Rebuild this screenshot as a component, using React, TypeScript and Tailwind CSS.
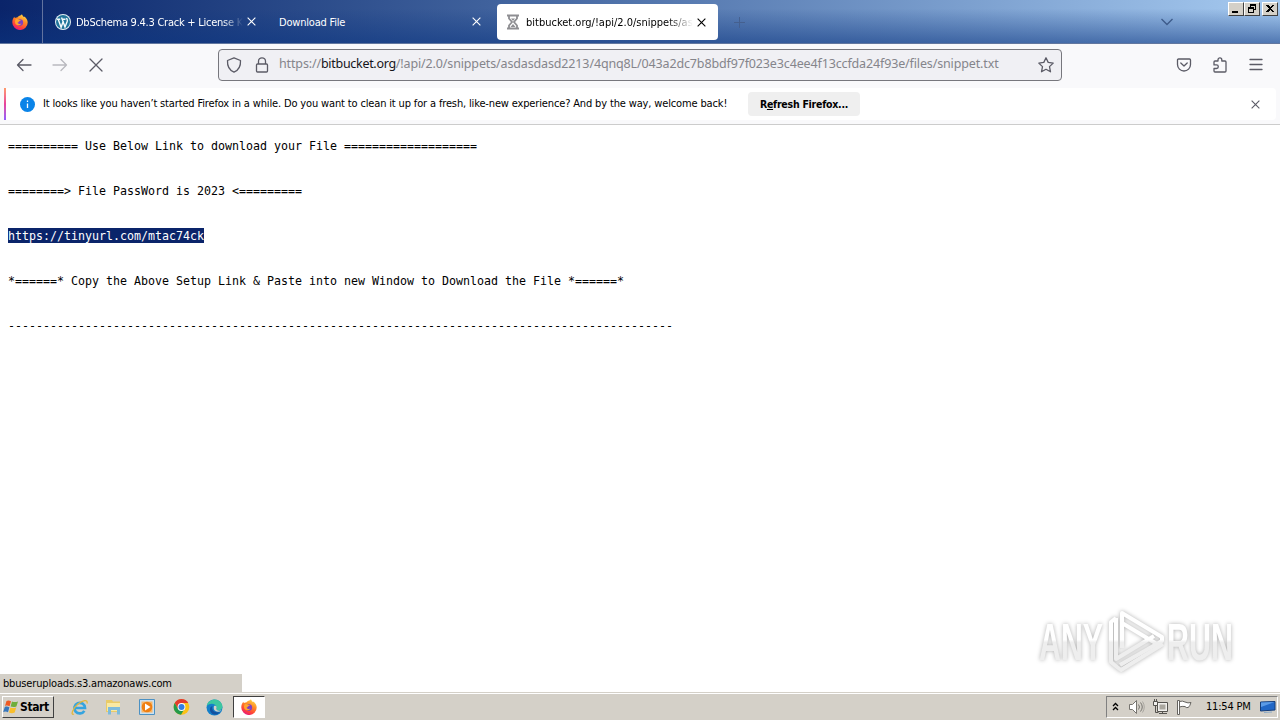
import type { ReactNode } from "react";

const LINES = [
  "========== Use Below Link to download your File ===================",
  "========> File PassWord is 2023 <=========",
  "https://tinyurl.com/mtac74ck",
  "*======* Copy the Above Setup Link & Paste into new Window to Download the File *======*",
  "-".repeat(95),
];

function FirefoxIcon({ className }: { className: string }) {
  return (
    <svg className={className} viewBox="0 0 16 16">
      <defs>
        <linearGradient id="fx" x1="0.8" y1="0" x2="0.3" y2="1">
          <stop offset="0" stopColor="#ffe14a" />
          <stop offset="0.4" stopColor="#ff8a26" />
          <stop offset="0.75" stopColor="#ff4238" />
          <stop offset="1" stopColor="#e31587" />
        </linearGradient>
      </defs>
      <path
        fill="url(#fx)"
        d="M10 .3c.2 1 .9 1.700 1.800 2.600.5-.1.8-.1 1.200.100 1.600 1.500 2.700 3.300 2.700 5.400A7.700 7.600 0 0 1 .3 8.500c0-2.200.8-4.200 2-5.700l.5 1.300c1-.7 1.600-.7 2.400-.5C6.300 1.500 8.500 2.300 10 .3z"
      />
      <circle cx="7.800" cy="8.600" r="3.300" fill="#7d3fc4" />
      <path fill="#ffa52c" d="M3.500 5.500c1.300-.8 2.700-.5 3.700.2.800.2 1.400.2 1.700.4-.2.900-1.200.9-1.900 1.300-.5.300-.5 1.200-1.500 1.200.500 1.500 2.500 1.900 4 1-1.300 2.400-5.200 2.400-6.300-.4-.4-1.200-.3-2.500.3-3.700z" />
    </svg>
  );
}

function WordPressIcon() {
  return (
    <svg className="h-4 w-4 shrink-0" viewBox="0 0 16 16">
      <circle cx="8" cy="8" r="8" fill="#e4f0f4" />
      <circle cx="8" cy="8" r="7" fill="#21759b" />
      <path d="M2 5.200h3.200M7 5.200h3.500M3.200 5.300l2.900 8 2.300-6.500M6.500 3.500l.8 2 2.700 7.600 2.200-5.600c.6-1.600-.2-2.300-.8-3.500" fill="none" stroke="#f4fafc" strokeWidth="1.400" />
    </svg>
  );
}

function HourglassIcon() {
  return (
    <svg className="h-4 w-4 shrink-0" viewBox="0 0 16 16">
      <path d="M2 1.500h12M2 14.500h12" stroke="#8e8e92" strokeWidth="2" />
      <path d="M4 2v2.500L7 8l-3 3.500V14M12 2v2.500L9 8l3 3.500V14" fill="none" stroke="#8e8e92" strokeWidth="1.800" />
      <path d="M6 4.500h4L8 7zM5.500 13L8 10l2.500 3z" fill="#8e8e92" />
    </svg>
  );
}

function Cross({ className }: { className: string }) {
  return (
    <svg className={className} viewBox="0 0 10 10" fill="none" stroke="currentColor">
      <path d="M.7.7l8.600 8.600M9.300.7L.7 9.300" strokeWidth="1.200" />
    </svg>
  );
}

function Line({ children, className = "h-4 w-4" }: { children: ReactNode; className?: string }) {
  return (
    <svg
      className={`shrink-0 ${className}`}
      viewBox="0 0 16 16"
      fill="none"
      stroke="#5b5b66"
      strokeWidth="1.300"
      strokeLinecap="round"
      strokeLinejoin="round"
    >
      {children}
    </svg>
  );
}

function CaptionButton({ children }: { children: ReactNode }) {
  return (
    <div className="h-[14px] w-4 border border-t-white border-l-white border-r-[#404040] border-b-[#404040] bg-[#d4d0c8]">
      <svg className="h-3 w-[14px]" viewBox="0 0 14 12" fill="#000" shapeRendering="crispEdges">
        {children}
      </svg>
    </div>
  );
}

function TabStrip() {
  return (
    <div className="h-11 bg-linear-to-r from-[#0a246a] to-[#a6caf0]">
      <div className="flex h-full border-b border-[#62779f] bg-linear-to-b from-transparent from-20% to-[#0b3580]/55">
        <div className="flex w-[43px] items-center border-r border-[#62739f] pl-3">
          <FirefoxIcon className="h-4 w-4" />
        </div>
        <div className="flex w-[220px] items-center pl-3 text-white">
          <WordPressIcon />
          <div className="ml-[5px] w-[167px] pt-[3px] whitespace-nowrap mask-r-from-88% mask-r-to-100% text-[11px] tracking-[-0.25px]">
            DbSchema 9.4.3 Crack + License K
          </div>
          <Cross className="ml-1 h-[9px] w-[9px] shrink-0" />
        </div>
        <div className="flex w-[234px] items-center pl-4 text-white">
          <div className="w-[193px] pt-[3px] text-[11px] tracking-[-0.2px]">Download File</div>
          <Cross className="h-[9px] w-[9px]" />
        </div>
        <div className="mt-1 flex h-9 w-[221px] items-center rounded bg-white pl-2 text-black">
          <HourglassIcon />
          <div className="ml-[5px] w-[167px] pt-[2px] whitespace-nowrap mask-r-from-85% mask-r-to-100% text-[11px]">
            bitbucket.org/!api/2.0/snippets/as
          </div>
          <Cross className="ml-1 h-[9px] w-[9px] shrink-0" />
        </div>
        <svg className="mt-[17px] ml-4 h-[11px] w-[11px]" viewBox="0 0 11 11" stroke="#45608f">
          <path d="M0 5.500h11M5.500 0v11" />
        </svg>
        <svg className="mt-[18px] mr-[55px] ml-auto h-2 w-3" viewBox="0 0 12 8" fill="none" stroke="#3e5c8b" strokeWidth="1.400">
          <path d="M.5 1L6 6.500 11.500 1" />
        </svg>
        <div className="mt-[2px] mr-[2px] flex">
          <CaptionButton>
            <path d="M3 8h6v2H3z" />
          </CaptionButton>
          <CaptionButton>
            <path d="M5 1h6v6H9V6h1V3H6v1H5zM3 4h6v6H3zM4 6v3h4V6z" fillRule="evenodd" />
          </CaptionButton>
          <div className="ml-[2px]">
            <CaptionButton>
              <path d="M3 2h2l2 2 2-2h2L8 5.500 11 9H9L7 7 5 9H3l3-3.500z" />
            </CaptionButton>
          </div>
        </div>
      </div>
    </div>
  );
}

function Toolbar() {
  return (
    <div className="flex h-11 items-center bg-[#f9f9fb] pb-[3px]">
      <div className="flex w-[218px] items-center gap-5 pl-4">
        <Line>
          <path d="M15 8H1.500M7 2.500L1.500 8 7 13.500" />
        </Line>
        <div className="opacity-40">
          <Line>
            <path d="M1 8h13.500M9 2.500L14.500 8 9 13.500" />
          </Line>
        </div>
        <Line>
          <path d="M2 2l12 12M14 2L2 14" />
        </Line>
      </div>
      <div className="flex h-8 w-[844px] items-center rounded border border-[#77777d] bg-[#f0f0f4] pl-[7px]">
        <Line>
          <path d="M8 .8l6.500 2.700c.3 5-1.500 9.500-6.500 11.700C3 13 1.200 8.500 1.500 3.500z" />
        </Line>
        <Line className="ml-3 h-4 w-4">
          <path d="M3.500 7h9a1 1 0 0 1 1 1v6a1 1 0 0 1-1 1h-9a1 1 0 0 1-1-1V8a1 1 0 0 1 1-1zM4.500 7V4.300a3.500 3.500 0 0 1 7 0V7" />
        </Line>
        <div className="ml-[9px] w-[759px] whitespace-nowrap font-['Noto_Sans',sans-serif] text-[12.500px] tracking-[-0.14px] text-[#85858b]">
          https://<span className="tracking-[-0.3px] text-[#15141a]">bitbucket.org</span>
          /!api/2.0/snippets/asdasdasd2213/4qnq8L/043a2dc7b8bdf97f023e3c4ee4f13ccfda24f93e/files/snippet.txt
        </div>
        <Line>
          <path d="M8 .8l2.200 4.600 5 .7-3.700 3.500 1 5.200L8 12.300l-4.500 2.500 1-5.200L.8 6.100l5-.7z" />
        </Line>
      </div>
      <div className="ml-auto flex items-center gap-5 pr-4">
        <Line>
          <path d="M2.500 2h11a1 1 0 0 1 1 1v4.500a6.500 6.500 0 0 1-13 0V3a1 1 0 0 1 1-1zM4.800 6L8 9l3.200-3" />
        </Line>
        <Line>
          <path d="M6 4V2.800a1.900 1.900 0 0 1 3.800 0V4H13a1 1 0 0 1 1 1v9a1 1 0 0 1-1 1H3a1 1 0 0 1-1-1v-2.500h2.500a1.800 1.800 0 0 0 0-3.600H2V5a1 1 0 0 1 1-1z" />
        </Line>
        <Line>
          <path d="M2 2.500h12M2 7.500h12M2 12.500h12" />
        </Line>
      </div>
    </div>
  );
}

function Notification() {
  return (
    <div className="h-[37px] border-b border-[#cccccc] bg-[#f9f9fb] pr-1 pl-1">
      <div className="flex h-8 items-center rounded bg-white">
        <div className="h-8 w-[2px] bg-linear-to-b from-[#ff9a6a] via-[#e8409a] to-[#9059ff]" />
        <svg className="ml-[14px] h-[15px] w-[15px]" viewBox="0 0 15 15">
          <circle cx="7.500" cy="7.500" r="7.500" fill="#0a84e8" />
          <path d="M7.500 6.500V11M7.500 3.500v1.500" stroke="#fff" strokeWidth="1.300" />
        </svg>
        <div className="ml-2 w-[705px] text-[11px] tracking-[-0.147px] whitespace-nowrap">
          It looks like you haven’t started Firefox in a while. Do you want to clean it up for a fresh, like-new experience? And by the way, welcome back!
        </div>
        <div className="flex h-6 w-28 items-center justify-center rounded bg-[#efefef] pt-px text-[10.500px] tracking-[-0.25px] font-bold whitespace-nowrap">
          R<span className="underline">e</span>fresh Firefox...
        </div>
        <Cross className="mr-4 ml-auto h-[9px] w-[9px] text-[#5b5b66]" />
      </div>
    </div>
  );
}

function Watermark() {
  return (
    <svg
      className="absolute top-[602px] left-[1026px] h-[76px] w-[220px] drop-shadow-[0_0_2px_#b0b0b0]"
      viewBox="-6 -4 220 76"
    >
      <defs>
        <linearGradient id="mark" gradientUnits="userSpaceOnUse" x1="0" y1="0" x2="0" y2="70">
          <stop offset="0.48" stopColor="#ffffff" />
          <stop offset="0.52" stopColor="#eeeeee" />
        </linearGradient>
      </defs>
      <g fill="url(#mark)" fontFamily="Liberation Sans, sans-serif" fontSize="52" fontWeight="bold">
        <text x="7" y="54" textLength="64" lengthAdjust="spacingAndGlyphs">ANY</text>
        <text x="135" y="54" textLength="66" lengthAdjust="spacingAndGlyphs">RUN</text>
      </g>
      <g fill="none" stroke="url(#mark)" strokeWidth="4" strokeLinejoin="round">
        <path d="M90 42V7l40 24v4L88 59" />
        <path d="M84 12l-5 4v40l6 5M90 17l35 21M84 12v41l38-23M85 61l4 3 42-26" />
      </g>
    </svg>
  );
}

function Taskbar() {
  return (
    <div className="flex h-7 border-t border-[#d4d0c8] bg-[#d4d0c8]">
      <div className="flex w-full items-center border-t border-white pl-[2px]">
        <div className="flex h-[22px] w-[52px] items-center border border-t-white border-l-white border-r-[#404040] border-b-[#404040] text-[12px] font-bold">
          <svg className="h-4 w-4 shrink-0" viewBox="0 0 16 16">
            <path d="M3.500 2C5 1 6.500 1.500 8 2.200L6.600 7.300C5 6.500 3.700 6.400 2 7z" fill="#ee5a24" />
            <path d="M9 2.600c2 .8 3.800.6 6-.2l-1.600 5.100c-2 .8-4 .7-5.800.1z" fill="#6fae3c" />
            <path d="M1.800 8c1.500-.7 3-.5 4.600.2L5 13.200c-1.700-.8-3.200-.8-4.800-.1z" fill="#3777bc" />
            <path d="M7.400 8.600c1.800.7 3.800.7 5.800-.1l-1.500 5c-2 .9-4 .8-5.700 0z" fill="#f9be2b" />
          </svg>
          <span className="ml-px tracking-[-0.4px]">Start</span>
        </div>
        <div className="ml-[17px] flex items-center gap-[17px]">
          <svg className="h-[17px] w-[17px]" viewBox="0 0 17 17" fill="none">
            <path d="M13.300 11.800A5.300 5.300 0 1 1 14 9H4" stroke="#35a4df" strokeWidth="2.700" />
            <path d="M3 15C-1 17 2 9 7 5s10-5 9-.5" stroke="#e3b73b" strokeWidth="1.300" />
          </svg>
          <svg className="h-4 w-[17px]" viewBox="0 0 17 16">
            <path d="M1 1h6l1 1.500h7V13H1z" fill="#e9cb68" />
            <path d="M2 4h13v8H2z" fill="#f8e9a3" />
            <path d="M3 15.500V8h12v7.500h-3V11H6v4.500z" fill="#7dbbdc" />
          </svg>
          <svg className="h-4 w-[17px]" viewBox="0 0 17 16">
            <path d="M.5.5h15v15H.5z" fill="#c9e0f1" stroke="#4c91c3" />
            <path d="M2.500 2.500h11v11h-11z" fill="#f9b565" />
            <circle cx="8" cy="8" r="5.300" fill="#ef7f12" />
            <path d="M6 4.500v7L11.500 8z" fill="#fff" />
          </svg>
          <svg className="h-4 w-[17px]" viewBox="0 0 16 16">
            <circle cx="8" cy="8" r="7.800" fill="#fbc116" />
            <path d="M1.200 4.100A7.800 7.800 0 0 1 14.800 4.100H8L4.600 10z" fill="#e33b2e" />
            <path d="M1.200 4.100A7.800 7.800 0 0 0 7.500 15.800l3.600-6-6.500.2z" fill="#249a4b" />
            <circle cx="8" cy="8" r="3.900" fill="#fff" />
            <circle cx="8" cy="8" r="3" fill="#337ee4" />
          </svg>
          <svg className="-ml-px h-[17px] w-[17px]" viewBox="0 0 17 17">
            <circle cx="8.500" cy="8.500" r="8" fill="#147fc9" />
            <path d="M.7 7C2-.5 13-2 16 5.500c1.500 4-1.500 6.500-4.500 6-2-.3-1-1.500-.7-2.500C10 4 4 3.500.7 7z" fill="#3dc6a0" />
            <path d="M6.500 7c-1.500 4 2 7.500 7.500 6-4 5-10.500 2-10-3 .2-2 1-2.500 2.500-3z" fill="#1451a0" />
            <path d="M8 7c2-1 3 .5 2.500 2-.8 2 1 3 5 2.500-3.500 2.500-9 1-7.500-4.500z" fill="#d4d0c8" />
          </svg>
        </div>
        <div className="ml-[10px] flex h-[22px] w-8 items-center justify-center border border-t-[#404040] border-l-[#404040] border-r-white border-b-white bg-white">
          <FirefoxIcon className="h-4 w-4" />
        </div>
        <div className="mr-[2px] ml-auto flex h-[22px] w-[172px] items-center border border-t-[#808080] border-l-[#808080] border-r-white border-b-white pl-1">
          <svg className="h-[10px] w-[10px]" viewBox="0 0 10 10" fill="none" stroke="#000" strokeWidth="1.300">
            <path d="M2 4l2.500-2.500L7 4M2 8l2.500-2.500L7 8" />
          </svg>
          <svg className="ml-[7px] h-4 w-[17px]" viewBox="0 0 17 16" fill="none" stroke="#76746f">
            <path d="M1.500 5.500h3l4-4v13l-4-4h-3z" fill="#fff" />
            <path d="M10.500 5.500q2 2.500 0 5M12.500 3.500q3.500 4.500 0 9" />
            <path d="M14.500 2.500q3.500 5.500 0 11" stroke="#a9a6a0" />
          </svg>
          <svg className="ml-[7px] h-4 w-4" viewBox="0 0 16 16" fill="none" stroke="#55534f">
            <path d="M5.500 3.500h10v9h-10z" fill="#f1f0ed" />
            <path d="M7.500 5.500h6v5h-6z" fill="#aaa79f" stroke="none" />
            <path d="M1.500 2.500h4v4h-4z" fill="#f1f0ed" />
            <path d="M2.500 0v2M4.500 0v2M3.500 7v6.500h3M7 14.500h8M10.500 13v1" />
          </svg>
          <svg className="ml-2 h-4 w-4" viewBox="0 0 16 16" fill="#fff" stroke="#65635f">
            <path d="M1.500 1.500h2v14h-2zM3.500 2.500q3-1 5.500.5 3 1.500 6 .5c-1 2-1 4-3 5q-2 .5-3-1-3-.5-5.500.5z" />
          </svg>
          <span className="ml-[14px] w-[45px] pt-px text-[11px] tracking-[-0.2px] whitespace-nowrap">11:54 PM</span>
          <svg className="ml-[9px] h-[14px] w-4 shrink-0" viewBox="0 0 16 14">
            <path d="M.5 2l14.500-.5V10L.5 11z" fill="#2167c6" stroke="#173e79" />
            <path d="M1 2.500l13.500-.5L1 7z" fill="#5b9be7" />
            <path d="M4 12.500l8-.5" stroke="#8eabc6" />
          </svg>
        </div>
      </div>
    </div>
  );
}

export default function App() {
  return (
    <div className="relative flex h-[720px] w-[1280px] flex-col overflow-hidden bg-white font-['DejaVu_Sans_Condensed','DejaVu_Sans',sans-serif] text-black">
      <TabStrip />
      <Toolbar />
      <Notification />
      <main className="flex flex-1 flex-col gap-[30px] pt-[13px] pl-2 font-['DejaVu_Sans_Mono',monospace] text-[11.630px] leading-[17px]">
        {LINES.map((line, i) => (
          <pre key={i} className={`h-[15px] w-fit font-[inherit] ${i === 2 ? "bg-[#0a246a] text-white" : ""}`}>
            {line}
          </pre>
        ))}
      </main>
      <div className="absolute top-[674px] left-0 flex h-[18px] w-[242px] items-center bg-[#d4d0c8] pt-[3px] pl-[3px] text-[11px] tracking-[-0.16px]">
        bbuseruploads.s3.amazonaws.com
      </div>
      <Watermark />
      <Taskbar />
    </div>
  );
}
